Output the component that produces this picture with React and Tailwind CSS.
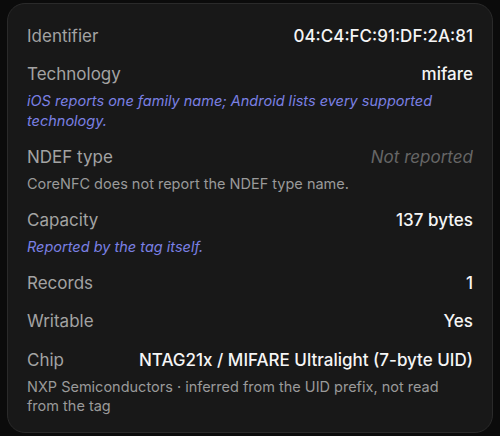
import React from "react";

const rows = [
  { label: "Identifier", value: "04:C4:FC:91:DF:2A:81" },
  {
    label: "Technology",
    value: "mifare",
    hint: "iOS reports one family name; Android lists every supported technology.",
    hintBlue: true,
  },
  {
    label: "NDEF type",
    value: "Not reported",
    muted: true,
    hint: "CoreNFC does not report the NDEF type name.",
  },
  { label: "Capacity", value: "137 bytes", hint: "Reported by the tag itself.", hintBlue: true },
  { label: "Records", value: "1" },
  { label: "Writable", value: "Yes" },
  {
    label: "Chip",
    value: "NTAG21x / MIFARE Ultralight (7-byte UID)",
    hint: "NXP Semiconductors · inferred from the UID prefix, not read from the tag",
  },
];

export default function App() {
  return (
    <div
      className="w-[500px] h-[436px] bg-[#0b0b0b] pt-[3px] px-[7px]"
      style={{ fontFamily: "Inter, 'Noto Sans', sans-serif" }}
    >
      <div className="h-[430px] rounded-[18px] bg-[#181818] border border-[#2a2a2a] px-[19px] pt-[12px]">
        {rows.map((r) => (
          <div key={r.label} className={r.hint ? "pt-[10px] pb-[7px]" : "pt-[10px] pb-[8px]"}>
            <div className="flex items-center justify-between h-[20.5px]">
              <span className="text-[17px] text-[#a3a3a3]">{r.label}</span>
              {r.muted ? (
                <span className="text-[17px] italic text-[#666666]">{r.value}</span>
              ) : (
                <span className="text-[17px] font-medium text-[#f5f5f5]">{r.value}</span>
              )}
            </div>
            {r.hint && (
              <div
                className={
                  "mt-[6px] text-[14.5px] leading-[19.5px] " +
                  (r.hintBlue ? "italic text-[#7b80e4]" : "text-[#9a9a9a]")
                }
              >
                {r.hint}
              </div>
            )}
          </div>
        ))}
      </div>
    </div>
  );
}
